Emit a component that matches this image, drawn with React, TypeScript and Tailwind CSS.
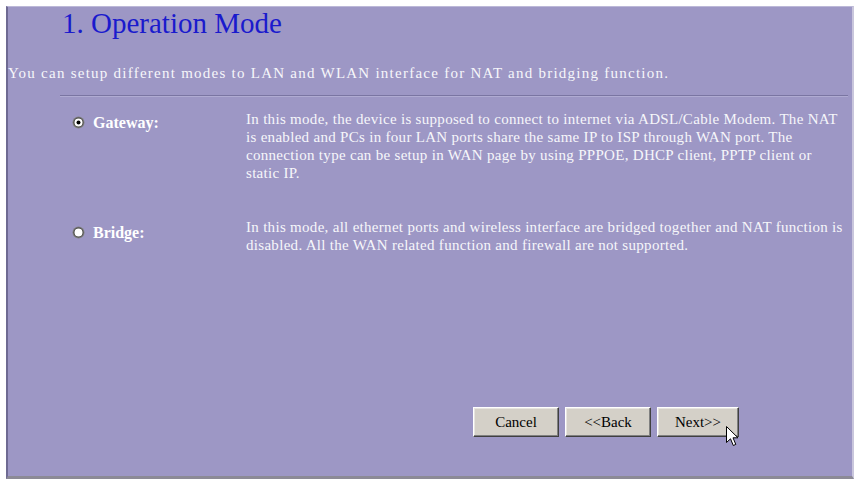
import React from 'react';

const serif = { fontFamily: '"Liberation Serif", "Times New Roman", serif' };

function Radio({ checked }: { checked?: boolean }) {
  return (
    <svg width="13" height="13" viewBox="0 0 13 13" className="shrink-0">
      <circle cx="6.5" cy="6.5" r="6" fill="#808080" />
      <path d="M11.2 2.8 A6 6 0 0 1 2.8 11.2 A6 6 0 0 0 11.2 2.8 Z" fill="#ffffff" />
      <circle cx="6.5" cy="6.5" r="5" fill="#404040" />
      <path d="M10 3 A5 5 0 0 1 3 10 A5 5 0 0 0 10 3 Z" fill="#d4d0c8" />
      <circle cx="6.5" cy="6.5" r="4" fill="#ffffff" />
      {checked && <circle cx="6.5" cy="6.5" r="2" fill="#000000" />}
    </svg>
  );
}

function WinButton({ label, width }: { label: string; width: string }) {
  return (
    <button
      className={`${width} h-[30px] bg-[#d4d0c8] text-black text-[15px] leading-none border border-t-white border-l-white border-r-[#404040] border-b-[#404040] shadow-[inset_-1px_-1px_0_#808080,inset_1px_1px_0_#e8e6e0]`}
      style={serif}
    >
      {label}
    </button>
  );
}

const modes = [
  {
    label: 'Gateway:',
    checked: true,
    pad: 'pt-[4px]',
    lines: [
      'In this mode, the device is supposed to connect to internet via ADSL/Cable Modem. The NAT',
      'is enabled and PCs in four LAN ports share the same IP to ISP through WAN port. The',
      'connection type can be setup in WAN page by using PPPOE, DHCP client, PPTP client or',
      'static IP.',
    ],
  },
  {
    label: 'Bridge:',
    checked: false,
    pad: 'pt-[6px]',
    lines: [
      'In this mode, all ethernet ports and wireless interface are bridged together and NAT function is',
      'disabled. All the WAN related function and firewall are not supported.',
    ],
  },
];

export default function App() {
  return (
    <div className="min-h-screen bg-white pl-[6px] pt-[6px]" style={serif}>
      <div className="relative w-[848px] h-[473px] bg-[#9d97c5] border-t border-t-[#bcb8d8] border-l-2 border-l-[#6e6a92] border-r-2 border-r-[#c9c6dc] border-b-[3px] border-b-[#8c8a96] flex flex-col">
        {/* Title */}
        <h1 className="pl-[54px] text-[29px] leading-[32px] text-[#1a1acd]">1. Operation Mode</h1>

        <p className="mt-[25px] text-[15px] leading-[18px] text-[#f6f6fa] tracking-[1.25px] whitespace-nowrap">
          You can setup different modes to LAN and WLAN interface for NAT and bridging function.
        </p>

        <div className="mt-[13px] ml-[52px] mr-[4px] h-[2px] border-t border-t-[#7a75a2] border-b border-b-[#b0abd2]" />

        {/* Modes */}
        <div className="mt-[13px] flex flex-col gap-[36px]">
          {modes.map((m) => (
            <div key={m.label} className="flex pl-[64px]">
              <div className={`flex w-[174px] shrink-0 ${m.pad}`}>
                <div className="mt-[2px]">
                  <Radio checked={m.checked} />
                </div>
                <span className="ml-[8px] text-[16px] leading-[18px] font-bold text-white">{m.label}</span>
              </div>
              <p className="text-[15px] leading-[18px] text-[#f6f6fa] tracking-[0.3px] whitespace-nowrap">
                {m.lines.map((l, i) => (
                  <React.Fragment key={i}>
                    {l}
                    {i < m.lines.length - 1 && <br />}
                  </React.Fragment>
                ))}
              </p>
            </div>
          ))}
        </div>

        {/* Buttons */}
        <div className="mt-auto mb-[39px] ml-[465px] flex gap-[6px]">
          <WinButton label="Cancel" width="w-[86px]" />
          <WinButton label="<<Back" width="w-[86px]" />
          <WinButton label="Next>>" width="w-[82px]" />
        </div>

        {/* mouse cursor */}
        <svg
          width="13"
          height="21"
          viewBox="0 0 13 21"
          className="absolute left-[718px] top-[419px]"
        >
          <path
            d="M0.5 0.5 L0.5 16.5 L4.5 12.8 L7.3 19.5 L9.8 18.4 L7 11.8 L12 11.8 Z"
            fill="#ffffff"
            stroke="#000000"
            strokeWidth="1"
            strokeLinejoin="miter"
          />
        </svg>
      </div>
    </div>
  );
}
